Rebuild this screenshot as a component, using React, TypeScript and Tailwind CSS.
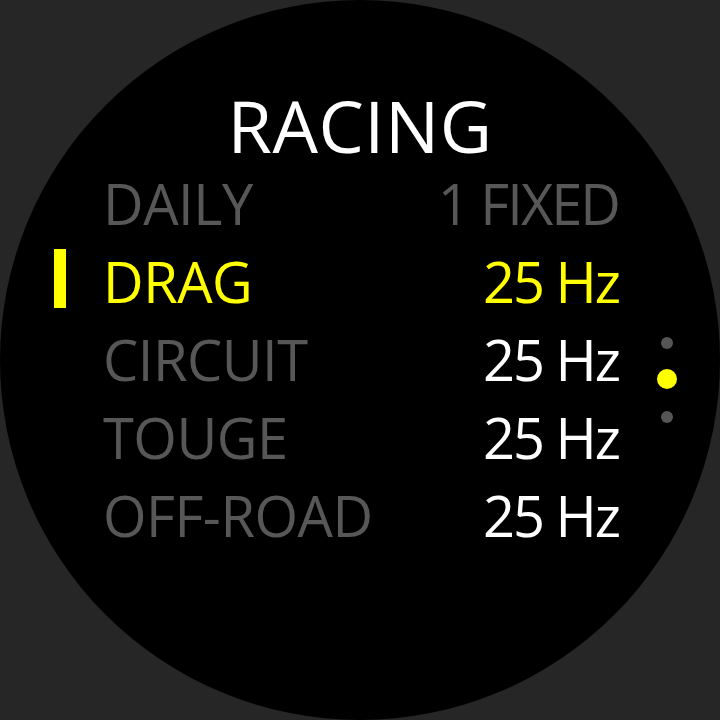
import React from "react";

type Mode = { name: string; value: string; active?: boolean; dim?: boolean };

const MODES: Mode[] = [
  { name: "DAILY", value: "1 FIXED", dim: true },
  { name: "DRAG", value: "25 Hz", active: true },
  { name: "CIRCUIT", value: "25 Hz" },
  { name: "TOUGE", value: "25 Hz" },
  { name: "OFF-ROAD", value: "25 Hz" },
];

function Row({ mode }: { mode: Mode }) {
  const nameColor = mode.active ? "text-[#ffff00]" : "text-[#575757]";
  const valueColor = mode.active
    ? "text-[#ffff00]"
    : mode.dim
    ? "text-[#575757]"
    : "text-white";

  return (
    <div className="flex items-start h-[78px] pl-[54px] pr-[101px]">
      <div
        className={`w-[12px] h-[59px] mt-[7px] shrink-0 ${
          mode.active ? "bg-[#ffff00]" : "bg-transparent"
        }`}
      />
      <span
        className={`ml-[37px] text-[56px] leading-[78px] font-medium tracking-[-0.5px] ${nameColor}`}
      >
        {mode.name}
      </span>
      <span
        className={`ml-auto text-[56px] leading-[78px] font-medium tracking-[-2px] ${valueColor}`}
      >
        {mode.value}
      </span>
    </div>
  );
}

export default function App() {
  return (
    <div
      className="w-[720px] h-[720px] bg-[#262626] overflow-hidden"
      style={{ fontFamily: '"Open Sans", "Noto Sans", sans-serif' }}
    >
      <div className="relative w-full h-full rounded-full bg-black pt-[89px]">
        <h1 className="text-center text-white text-[72px] leading-[72px] font-medium tracking-[0.5px]">
          RACING
        </h1>

        <div className="mt-[3px] flex flex-col">
          {MODES.map((m) => (
            <Row key={m.name} mode={m} />
          ))}
        </div>

        {/* Scroll indicator */}
        <div className="absolute left-[657px] top-[333px] w-[20px] flex flex-col items-center">
          <div className="w-[12px] h-[12px] rounded-full bg-[#555555] mt-[4px]" />
          <div className="w-[20px] h-[20px] rounded-full bg-[#ffff00] mt-[20px]" />
          <div className="w-[12px] h-[12px] rounded-full bg-[#555555] mt-[22px]" />
        </div>
      </div>
    </div>
  );
}
